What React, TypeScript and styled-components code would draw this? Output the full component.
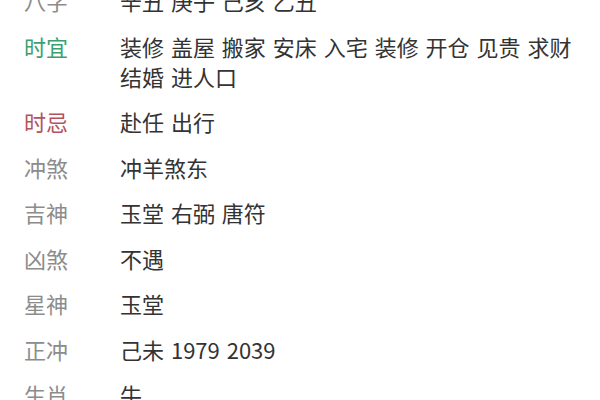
import React from "react";
import styled, { createGlobalStyle } from "styled-components";

const Global = createGlobalStyle`
  html, body { margin: 0; padding: 0; background: #ffffff; }
  body { width: 600px; height: 400px; overflow: hidden; }
`;

const List = styled.div`
  display: flex;
  flex-direction: column;
  gap: 15.5px;
  margin-top: -15px;
  padding-left: 24px;
  font-family: "Noto Sans CJK SC", "Noto Sans", sans-serif;
  font-size: 22px;
  line-height: 30px;
  word-spacing: 2px;
`;

const Row = styled.div`
  display: flex;
  align-items: flex-start;
`;

const Label = styled.div<{ $tone?: "good" | "bad" }>`
  flex: 0 0 96px;
  color: ${(p) => (p.$tone === "good" ? "#3c9f6f" : p.$tone === "bad" ? "#b4525f" : "#8c8c8c")};
`;

const Value = styled.div`
  flex: 1;
  color: #333333;
  padding-right: 10px;
`;

const rows: { label: string; value: React.ReactNode; tone?: "good" | "bad" }[] = [
  { label: "八字", value: "辛丑 庚子 己亥 乙丑" },
  {
    label: "时宜",
    value: (
      <>
        装修 盖屋 搬家 安床 入宅 装修 开仓 见贵 求财
        <br />
        结婚 进人口
      </>
    ),
    tone: "good",
  },
  { label: "时忌", value: "赴任 出行", tone: "bad" },
  { label: "冲煞", value: "冲羊煞东" },
  { label: "吉神", value: "玉堂 右弼 唐符" },
  { label: "凶煞", value: "不遇" },
  { label: "星神", value: "玉堂" },
  { label: "正冲", value: "己未 1979 2039" },
  { label: "生肖", value: "牛" },
];

export default function App() {
  return (
    <>
      <Global />
      <List>
        {rows.map((r) => (
          <Row key={r.label}>
            <Label $tone={r.tone}>{r.label}</Label>
            <Value>{r.value}</Value>
          </Row>
        ))}
      </List>
    </>
  );
}
